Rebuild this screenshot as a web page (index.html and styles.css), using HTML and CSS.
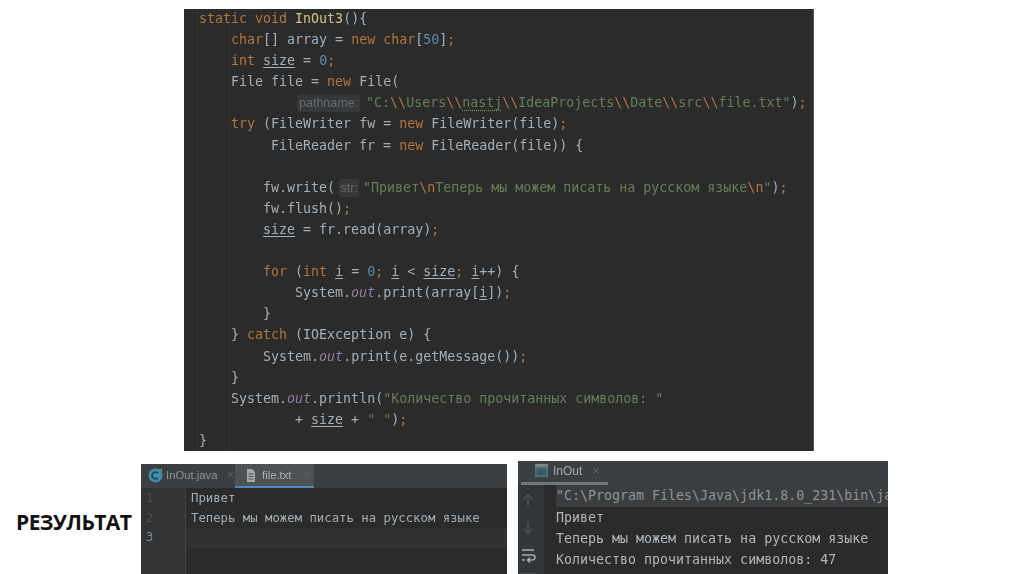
FILE: index.html
```html
<!DOCTYPE html>
<html lang="ru">
<head>
<meta charset="utf-8">
<title>InOut3</title>
<link rel="stylesheet" href="styles.css">
</head>
<body>
<main class="slide">
<section class="code-panel">
<pre class="code"><code><span class="k">static void</span> <span class="m">InOut3</span>(){
    <span class="k">char</span>[] array = <span class="k">new char</span>[<span class="n">50</span>]<span class="k">;</span>
    <span class="k">int</span> <span class="u">size</span> = <span class="n">0</span><span class="k">;</span>
    File file = <span class="k">new</span> File(
            <span class="hint hint-path">pathname:</span><span class="s">"C:<span class="k">\\</span>Users<span class="k">\\</span><span class="w">nastj</span><span class="k">\\</span>IdeaProjects<span class="k">\\</span>Date<span class="k">\\</span>src<span class="k">\\</span>file.txt"</span>)<span class="k">;</span>
    <span class="k">try</span> (FileWriter fw = <span class="k">new</span> FileWriter(file)<span class="k">;</span>
         FileReader fr = <span class="k">new</span> FileReader(file)) {

        fw.write(<span class="hint hint-str">str:</span><span class="s">"Привет<span class="k">\n</span>Теперь мы можем писать на русском языке<span class="k">\n</span>"</span>)<span class="k">;</span>
        fw.flush()<span class="k">;</span>
        <span class="u">size</span> = fr.read(array)<span class="k">;</span>

        <span class="k">for</span> (<span class="k">int</span> <span class="u">i</span> = <span class="n">0</span><span class="k">;</span> <span class="u">i</span> &lt; <span class="u">size</span><span class="k">;</span> <span class="u">i</span>++) {
            System.<span class="f">out</span>.print(array[<span class="u">i</span>])<span class="k">;</span>
        }
    } <span class="k">catch</span> (IOException e) {
        System.<span class="f">out</span>.print(e.getMessage())<span class="k">;</span>
    }
    System.<span class="f">out</span>.println(<span class="s">"Количество прочитанных символов: "</span>
            + <span class="u">size</span> + <span class="s">" "</span>)<span class="k">;</span>
}</code></pre>
</section>

<section class="results">
<h2 class="result-label">РЕЗУЛЬТАТ</h2>

<div class="editor">
<div class="tabs">
<div class="tab">
<svg class="icon" viewBox="0 0 16 16"><circle cx="8" cy="8" r="7.500" fill="#3f8ea8"/><path d="M10.600 5.600A3.600 3.600 0 1 0 10.600 10.400" fill="none" stroke="#1f4a58" stroke-width="2"/><path d="M11 1l4 0 0 4z" fill="#5a9a4a"/></svg>
<span>InOut.java</span><span class="x">×</span>
</div>
<div class="tab tab-active">
<svg class="icon icon-file" viewBox="0 0 10 15"><path d="M1 1h5l3 3v10H1z" fill="#a4a9ac"/><path d="M2.500 6h5M2.500 8.500h5M2.500 11h5" stroke="#4e5254" stroke-width="1"/></svg>
<span>file.txt</span><span class="x">×</span>
</div>
</div>
<div class="editor-body">
<div class="gutter"><span>1</span><span>2</span><span class="gutter-current">3</span></div>
<pre class="doc"><span>Привет</span>
<span>Теперь мы можем писать на русском языке</span>
<span class="caret-line"> </span></pre>
</div>
</div>

<div class="console">
<div class="console-tabs">
<div class="console-tab">
<svg class="icon" viewBox="0 0 16 16"><rect x="1" y="1" width="14" height="14" fill="#4c7078"/><rect x="1" y="1" width="14" height="3" fill="#7d8689"/><rect x="3" y="6" width="10" height="7" fill="#3a5a62"/></svg>
<span>InOut</span><span class="x">×</span>
</div>
</div>
<div class="console-body">
<div class="tools">
<svg class="tool" viewBox="0 0 16 16"><path d="M8 14V3M3.500 7.500 8 3l4.500 4.500" fill="none" stroke="#4d5052" stroke-width="1.600"/></svg>
<svg class="tool" viewBox="0 0 16 16"><path d="M8 2v11M3.500 8.500 8 13l4.500-4.500" fill="none" stroke="#4d5052" stroke-width="1.600"/></svg>
<svg class="tool" viewBox="0 0 16 16"><path d="M2 3h12M2 8h10.500a2.500 2.500 0 0 1 0 5H8M10 10.500 7.500 13l2.500 2.500M2 13h3" fill="none" stroke="#a9adb0" stroke-width="1.500"/></svg>
<div class="tool-on"></div>
</div>
<pre class="output"><span class="cmd">"C:\Program Files\Java\jdk1.8.0_231\bin\java.exe"</span>
<span>Привет</span>
<span>Теперь мы можем писать на русском языке</span>
<span>Количество прочитанных символов: 47</span></pre>
</div>
</div>
</section>
</main>
</body>
</html>
```
FILE: styles.css
```css
* { box-sizing: border-box; }
html, body { margin: 0; background: #fff; }
.slide { width: 1024px; height: 574px; overflow: hidden; display: flex; flex-direction: column; padding-top: 9px; }
pre, code { margin: 0; font-family: "DejaVu Sans Mono", "Liberation Mono", monospace; }

.code-panel {
  width: 630px; height: 442px; margin-left: 184px; overflow: hidden; flex: none;
  background-color: #2b2b2b;
  background-image: linear-gradient(#323232, #323232), linear-gradient(#323232, #323232);
  background-size: 1px 100%;
  background-position: 13px 0, 45px 0;
  background-repeat: no-repeat;
  border-right: 1px solid #55585a;
}
.code {
  margin: -1px 0 0 15px;
  font-size: 13.300px; line-height: 21.100px; color: #a3b0ba;
  filter: blur(.45px);
}
.code code { display: block; }
.k { color: #b4753d; }
.m { color: #d8c47c; }
.n { color: #5f8cad; }
.s { color: #667f57; }
.f { color: #8f7ba2; font-style: italic; }
.u { text-decoration: underline; text-underline-offset: 2px; }
.w { text-decoration: underline dotted #6f8f55; text-underline-offset: 2px; }
.hint {
  display: inline-block; font-family: "Liberation Sans", Arial, sans-serif; font-size: 12.500px; line-height: 18px;
  color: #6a6d6f; background: #353738; border-radius: 2px; text-align: center;
}
.hint-path { width: 63px; margin: 0 6px 0 2px; }
.hint-str { width: 20px; margin: 0 4px 0 4px; }

.results { display: flex; align-items: flex-start; margin-top: 10px; padding-left: 16px; height: 113px; }
.result-label {
  flex: none; width: 125px; margin: 47px 0 0; color: #111; letter-spacing: -.55px;
  font-family: "Open Sans", "Liberation Sans", sans-serif; font-size: 21px; line-height: 28px; font-weight: 700;
}
.editor { flex: none; width: 366px; height: 110px; margin-top: 3px; background: #2b2b2b; display: flex; flex-direction: column; overflow: hidden; color: #a3adb4; }
.tabs { display: flex; height: 24px; flex: none; background: #3c3f41; font: 11.300px/22px "Liberation Sans", Arial, sans-serif; filter: blur(.3px); }
.tab { display: flex; align-items: center; gap: 3px; padding: 0 6px 2px 7px; width: 94px; color: #8d9599; }
.tab-active { width: 79px; padding-left: 11px; gap: 6px; background: #4e5254; border-bottom: 2px solid #4a88c7; padding-bottom: 0; color: #a9b0b4; }
.icon { width: 15px; height: 15px; flex: none; }
.icon-file { width: 10px; }
.x { color: #5d6163; margin-left: 6px; font-size: 13px; }
.editor-body { display: flex; flex: 1; min-height: 0; }
.gutter { flex: none; width: 45px; background: #313335; border-right: 1px solid #414345; padding: 1px 0 0 5px; display: flex; flex-direction: column; font: 12px/19.500px "DejaVu Sans Mono", monospace; color: #4f5355; filter: blur(.3px); }
.gutter-current { color: #8a8e90; }
.doc { flex: 1; padding: 1px 0 0; font-size: 12.300px; line-height: 19.500px; filter: blur(.4px); }
.doc span { display: inline-block; padding-left: 5px; height: 19.500px; vertical-align: top; }
.doc .caret-line { display: block; width: 100%; background: #323232; }

.console { flex: none; width: 370px; height: 113px; margin-left: 11px; background: #2b2b2b; overflow: hidden; display: flex; flex-direction: column; color: #b0b6ba; }
.console-tabs { height: 24px; flex: none; background: #3c3f41; }
.console-tab { display: flex; align-items: center; gap: 4px; width: 87px; height: 24px; margin-left: 3px; padding: 0 0 2px 13px; border-bottom: 3px solid #73777a; font: 12px/20px "Liberation Sans", Arial, sans-serif; color: #a4abaf; filter: blur(.3px); }
.console-body { display: flex; flex: 1; min-height: 0; }
.tools { flex: none; width: 26px; padding: 7px 6px 0 0; background: #333638; display: flex; flex-direction: column; align-items: center; gap: 11.500px; }
.tool { width: 16px; height: 16px; flex: none; filter: blur(.3px); }
.tool-on { flex: none; width: 18px; height: 16px; background: #4b5052; border-radius: 2px; margin-top: -2px; }
.output { flex: 1; min-width: 0; margin-left: 12px; padding-top: .4px; font-size: 13.300px; line-height: 21.200px; overflow: hidden; white-space: pre; filter: blur(.4px); }
.output .cmd { display: inline-block; width: 340px; overflow: hidden; vertical-align: top; background: #3b3d3f; color: #8f9597; }
```
